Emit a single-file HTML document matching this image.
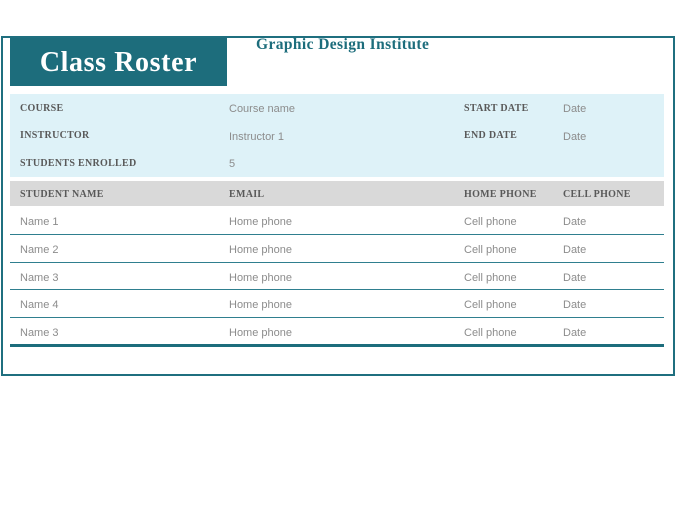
<!DOCTYPE html>
<html><head><style>
body{margin:0;width:675px;height:520px;background:#fff;position:relative;font-family:"Liberation Sans",sans-serif;overflow:hidden}
.frame{position:absolute;left:1px;top:36px;width:670px;height:336px;border:2px solid #1f6f7f}
.abs{position:absolute}
.title{left:10px;top:38px;width:217px;height:48px;background:#1d6d7c;color:#fff;font:bold 28px "Liberation Serif",serif;letter-spacing:.6px;text-align:center;line-height:50px}
.inst{left:256px;top:36px;color:#1d6d7c;font:bold 15.5px "Liberation Serif",serif;letter-spacing:.4px}
.band{left:10px;top:94px;width:654px;height:83px;background:#def2f8}
.hdr{left:10px;top:181px;width:654px;height:25px;background:#d9d9d9}
.lbl{font:bold 10px "Liberation Serif",serif;color:#595959;letter-spacing:.3px}
.val{font:11px "Liberation Sans",sans-serif;color:#8c8c8c}
.line{left:10px;width:654px;height:1px;background:#2f7f8f}
</style></head><body>
<div class="frame"></div>
<div class="abs title">Class Roster</div>
<div class="abs inst">Graphic Design Institute</div>
<div class="abs band"></div>
<div class="abs lbl" style="left:20px;top:103px">COURSE</div>
<div class="abs val" style="left:229px;top:103px">Course name</div>
<div class="abs lbl" style="left:464px;top:103px">START DATE</div>
<div class="abs val" style="left:563px;top:103px">Date</div>
<div class="abs lbl" style="left:20px;top:130px">INSTRUCTOR</div>
<div class="abs val" style="left:229px;top:131px">Instructor 1</div>
<div class="abs lbl" style="left:464px;top:130px">END DATE</div>
<div class="abs val" style="left:563px;top:131px">Date</div>
<div class="abs lbl" style="left:20px;top:158px">STUDENTS ENROLLED</div>
<div class="abs val" style="left:229px;top:158px">5</div>
<div class="abs hdr"></div>
<div class="abs lbl" style="left:20px;top:189px">STUDENT NAME</div>
<div class="abs lbl" style="left:229px;top:189px">EMAIL</div>
<div class="abs lbl" style="left:464px;top:189px">HOME PHONE</div>
<div class="abs lbl" style="left:563px;top:189px">CELL PHONE</div>

<div class="abs val" style="left:20px;top:216px">Name 1</div><div class="abs val" style="left:229px;top:216px">Home phone</div><div class="abs val" style="left:464px;top:216px">Cell phone</div><div class="abs val" style="left:563px;top:216px">Date</div>
<div class="abs line" style="top:234px"></div>
<div class="abs val" style="left:20px;top:244px">Name 2</div><div class="abs val" style="left:229px;top:244px">Home phone</div><div class="abs val" style="left:464px;top:244px">Cell phone</div><div class="abs val" style="left:563px;top:244px">Date</div>
<div class="abs line" style="top:262px"></div>
<div class="abs val" style="left:20px;top:272px">Name 3</div><div class="abs val" style="left:229px;top:272px">Home phone</div><div class="abs val" style="left:464px;top:272px">Cell phone</div><div class="abs val" style="left:563px;top:272px">Date</div>
<div class="abs line" style="top:289px"></div>
<div class="abs val" style="left:20px;top:299px">Name 4</div><div class="abs val" style="left:229px;top:299px">Home phone</div><div class="abs val" style="left:464px;top:299px">Cell phone</div><div class="abs val" style="left:563px;top:299px">Date</div>
<div class="abs line" style="top:317px"></div>
<div class="abs val" style="left:20px;top:327px">Name 3</div><div class="abs val" style="left:229px;top:327px">Home phone</div><div class="abs val" style="left:464px;top:327px">Cell phone</div><div class="abs val" style="left:563px;top:327px">Date</div>
<div class="abs line" style="top:344px;height:3px;background:#1d6d7c"></div>
</body></html>
